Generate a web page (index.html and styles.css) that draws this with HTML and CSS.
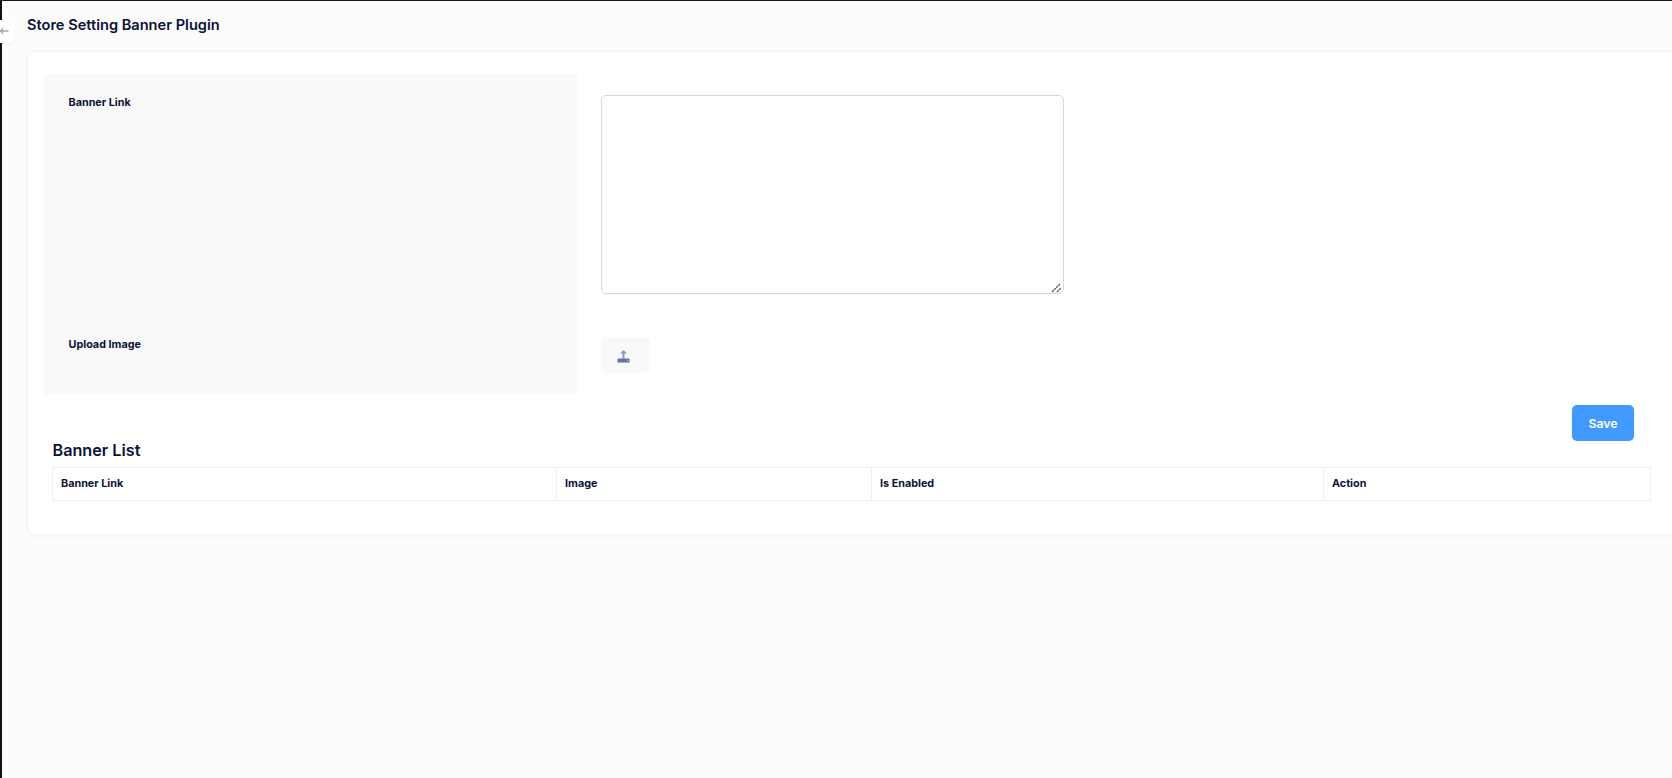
FILE: index.html
```html
<!DOCTYPE html>
<html lang="en">
<head>
  <meta charset="UTF-8">
  <meta name="viewport" content="width=device-width, initial-scale=1.0">
  <title>Store Setting Banner Plugin</title>
  <link rel="stylesheet" href="styles.css">
</head>
<body>
  <button type="button" class="back-btn" aria-label="Back">
    <svg width="10" height="8" viewBox="0 0 10 8"><path d="M8.5 4H0M3 1.2L0.4 4 3 6.8" fill="none" stroke="#a3a3b5" stroke-width="1.4"/></svg>
  </button>
  <main class="page">
    <h1 class="page-title">Store Setting Banner Plugin</h1>
    <section class="card">
      <form class="form">
        <label class="form-label" for="bannerLink">Banner Link</label>
        <div class="form-field">
          <div class="textarea-wrap">
            <textarea id="bannerLink" class="form-input"></textarea>
            <svg class="resize-grip" width="11" height="11" viewBox="0 0 11 11">
              <path d="M1 10L9.5 1.5M6 10L10 6" fill="none" stroke="#555" stroke-width="1.3" stroke-dasharray="2.4 0.6"/>
            </svg>
          </div>
        </div>
        <label class="form-label label-upload">Upload Image</label>
        <div class="form-field">
          <button type="button" class="upload-btn" aria-label="Upload Image">
            <svg class="upload-icon" width="13" height="13" viewBox="0 0 13 13">
              <path d="M6.5 0L3 3.6h2.5V9h2V3.6H10z" fill="#7d9ccc"/>
              <rect x="0.5" y="8.4" width="12" height="4" rx="0.5" fill="#66749c"/>
              <circle cx="10.8" cy="10.4" r="0.6" fill="#c8d6ee"/>
            </svg>
          </button>
        </div>
      </form>
      <div class="form-actions">
        <button type="button" class="save-btn">Save</button>
      </div>
      <h2 class="list-title">Banner List</h2>
      <table class="banner-table">
        <thead>
          <tr>
            <th class="col-link">Banner Link</th>
            <th class="col-image">Image</th>
            <th class="col-enabled">Is Enabled</th>
            <th>Action</th>
          </tr>
        </thead>
      </table>
    </section>
  </main>
</body>
</html>
```

FILE: styles.css
```css
* {
  box-sizing: border-box;
}
html, body {
  height: 100%;
}
body {
  margin: 0;
  overflow: hidden;
  font-family: Inter, "Noto Sans", sans-serif;
  color: #0a1338;
  background: #fcfcfc;
  border-top: 1px solid #1c1c1c;
  border-left: 2px solid #111;
}
.back-btn {
  position: absolute;
  top: 20px;
  left: 0;
  width: 14px;
  height: 23px;
  padding: 0 0 1px;
  border: none;
  border-radius: 0 5px 5px 0;
  background: #fff;
  box-shadow: 0 1px 3px rgba(0, 0, 0, 0.06);
  display: flex;
  align-items: center;
  justify-content: flex-start;
}
.page {
  padding: 15px 0 0 25px;
}
.page-title {
  margin: 0 0 16px;
  font-size: 14.6px;
  line-height: 19px;
  font-weight: 600;
}
.card {
  width: 1660px;
  height: 484px;
  padding: 22px 16px 0;
  background: #fff;
  border: 1px solid #f3f3f4;
  border-radius: 8px;
  box-shadow: 0 2px 6px rgba(0, 0, 0, 0.03);
}
.form {
  display: grid;
  grid-template-columns: 533px 1fr;
  grid-template-rows: 241px 79px;
}
.form-label {
  padding: 22px 24px 0 24.5px;
  background: #f9f9f9;
  font-size: 10.8px;
  line-height: 14px;
  font-weight: 700;
}
.label-upload {
  padding-top: 23px;
}
.form-field {
  padding: 21px 0 0 24px;
}
.textarea-wrap {
  position: relative;
  width: 463px;
}
.form-input {
  display: block;
  width: 463px;
  height: 199px;
  border: 1px solid #d5d7e3;
  border-radius: 5px;
  background: #fff;
  resize: none;
}
.resize-grip {
  position: absolute;
  right: 2px;
  bottom: 1px;
}
.upload-btn {
  width: 49px;
  height: 36px;
  margin-top: 1px;
  padding: 0;
  border: none;
  border-radius: 5px;
  background: #f9f9f9;
  display: flex;
  align-items: center;
  justify-content: center;
}
.upload-icon {
  margin: 3px 4px 0 0;
}
.form-actions {
  width: 1590px;
  padding-top: 11px;
  display: flex;
  justify-content: flex-end;
}
.save-btn {
  width: 62px;
  height: 36px;
  border: none;
  border-radius: 5px;
  background: #4099ff;
  color: #fff;
  font-family: inherit;
  font-size: 12.3px;
  font-weight: 600;
}
.list-title {
  margin: -2px 0 6px 8.5px;
  font-size: 16.2px;
  line-height: 22px;
  font-weight: 600;
}
.banner-table {
  width: 1599px;
  margin-left: 8px;
  border-collapse: collapse;
  table-layout: fixed;
}
.banner-table th {
  height: 33px;
  padding: 0 8px 2px;
  border: 1px solid #efeff0;
  text-align: left;
  font-size: 10.8px;
  font-weight: 700;
}
.col-link {
  width: 504px;
}
.col-image {
  width: 315px;
}
.col-enabled {
  width: 452px;
}
```
